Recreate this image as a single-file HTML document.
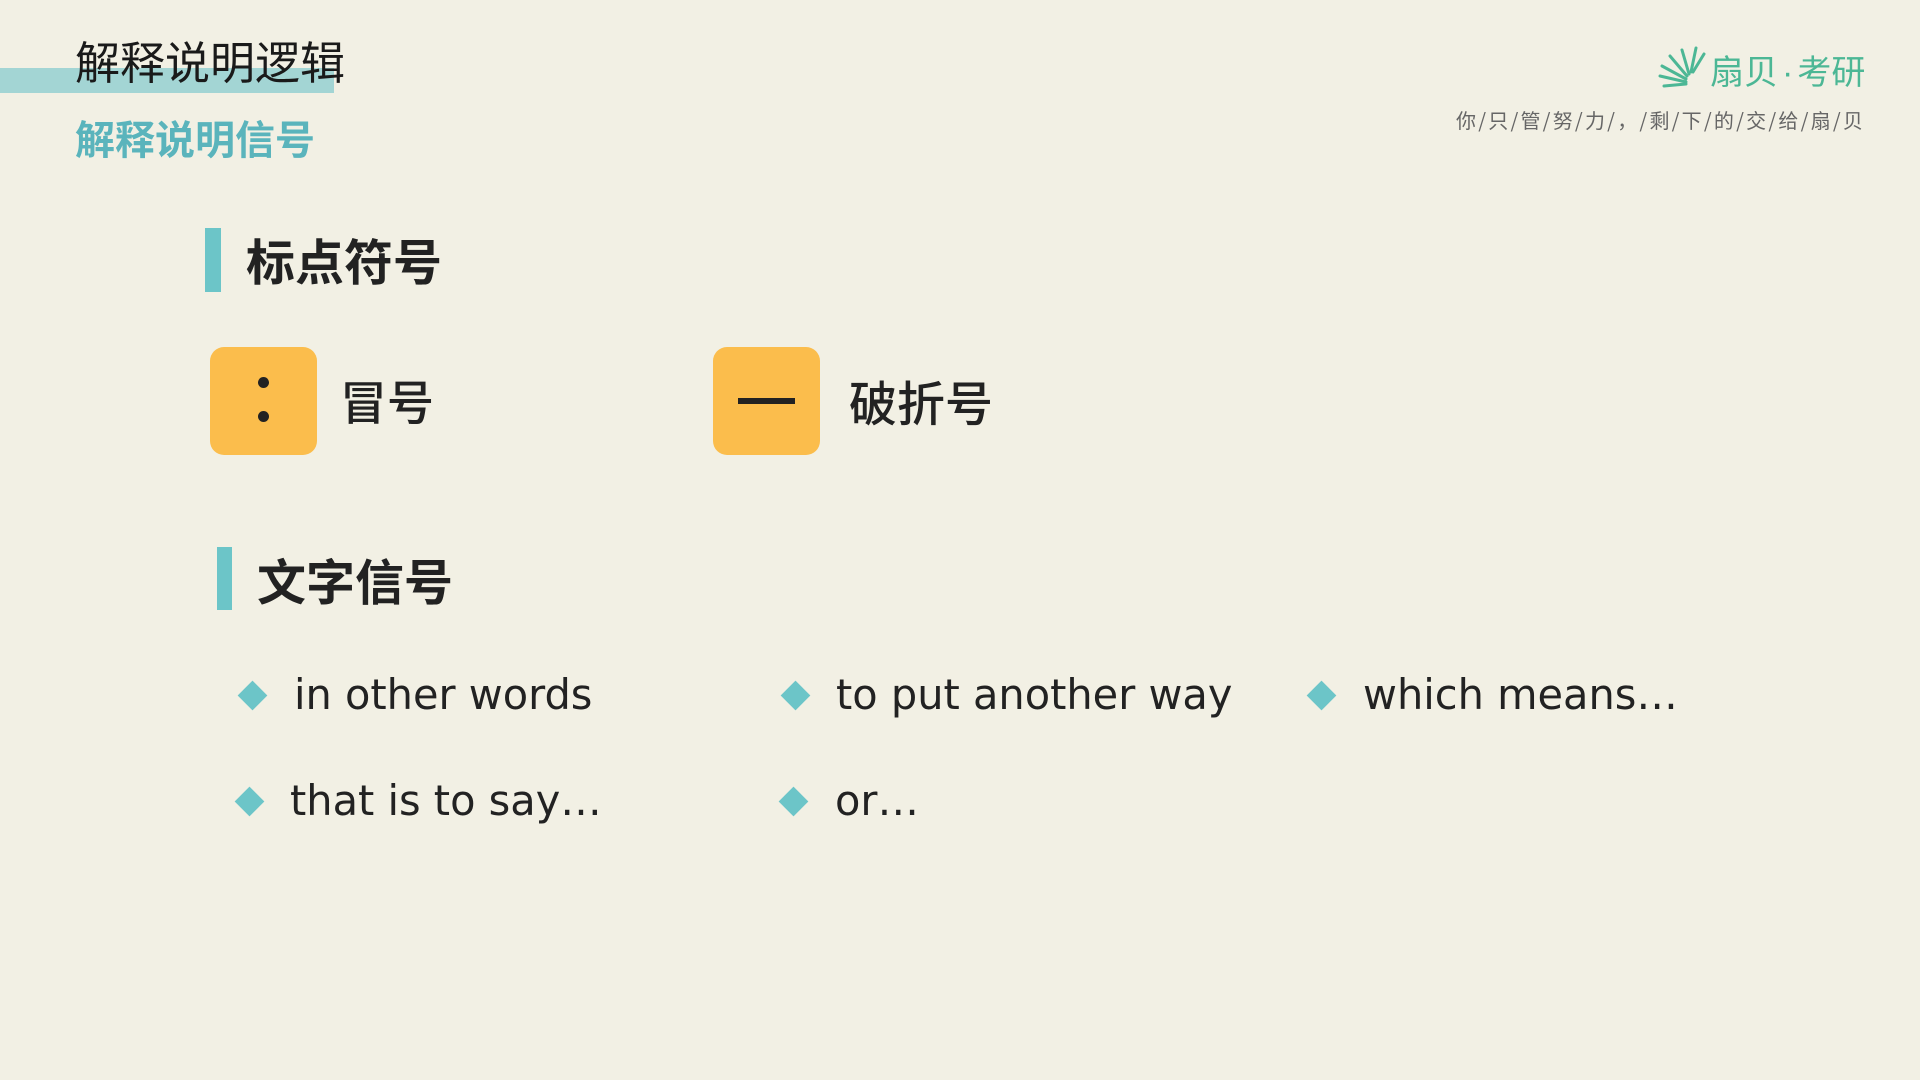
<!DOCTYPE html>
<html><head><meta charset="utf-8"><style>
*{margin:0;padding:0;box-sizing:border-box}
body{width:1920px;height:1080px;overflow:hidden;background:#f2f0e4;position:relative;font-family:"Liberation Sans","Noto Sans CJK SC",sans-serif;color:#222}
.a{position:absolute;white-space:nowrap}
.bar{position:absolute;background:#6cc5c8}
.box{position:absolute;width:107px;height:108px;border-radius:14px;background:#fbbd4c}
.dia{position:absolute;width:21px;height:21px;background:#6cc5c8;transform:rotate(45deg)}
.en{position:absolute;white-space:nowrap;line-height:1;color:#222;font-family:"DejaVu Sans","Liberation Sans",sans-serif;font-size:41.5px}
</style></head><body>
<div style="position:absolute;left:0;top:68px;width:334px;height:25px;background:#a3d5d4"></div>
<div class="a" style="left:75px;top:32px;font-size:45px;line-height:56px;color:#1a1a1a;font-family:'Noto Sans CJK SC',sans-serif">解释说明逻辑</div>
<div class="a" style="left:75px;top:112px;font-size:40px;line-height:50px;color:#5ab4bc;font-weight:bold;font-family:'Noto Sans CJK SC',sans-serif">解释说明信号</div>

<svg class="a" style="left:1656px;top:44px" width="52" height="46" viewBox="0 0 52 46" fill="none" stroke="#4cb795" stroke-width="3" stroke-linecap="round">
<path d="M4 32 L30 38"/><path d="M6 22 L30 35"/><path d="M14 12 L31 32"/><path d="M26 6 L33 30"/><path d="M40 4 L35 28"/><path d="M48 10 L37 28"/><path d="M8 42 L30 40"/>
</svg>
<div class="a" style="left:1710px;top:48px;font-size:34px;line-height:44px;color:#4cb795;font-family:'Noto Sans CJK SC',sans-serif">扇贝<span style="font-family:'Liberation Sans';margin:0 4px">·</span>考研</div>
<div class="a" style="left:1456px;top:106px;font-size:20px;line-height:28px;color:#666;letter-spacing:2.2px;font-family:'Noto Sans CJK SC',sans-serif">你/只/管/努/力/，/剩/下/的/交/给/扇/贝</div>

<div class="bar" style="left:205px;top:228px;width:16px;height:64px"></div>
<div class="a" style="left:246px;top:230px;font-size:49px;line-height:60px;font-weight:bold;font-family:'Noto Sans CJK SC',sans-serif">标点符号</div>

<div class="box" style="left:210px;top:347px"></div>
<div style="position:absolute;left:258px;top:377px;width:11px;height:11px;border-radius:50%;background:#222"></div>
<div style="position:absolute;left:258px;top:411px;width:11px;height:11px;border-radius:50%;background:#222"></div>
<div class="a" style="left:340px;top:370px;font-size:47px;line-height:60px;font-weight:500;font-family:'Noto Sans CJK SC',sans-serif">冒号</div>

<div class="box" style="left:713px;top:347px"></div>
<div style="position:absolute;left:738px;top:398px;width:57px;height:6px;background:#222"></div>
<div class="a" style="left:849px;top:370px;font-size:48px;line-height:60px;font-weight:500;font-family:'Noto Sans CJK SC',sans-serif">破折号</div>

<div class="bar" style="left:217px;top:547px;width:15px;height:63px"></div>
<div class="a" style="left:257px;top:550px;font-size:49px;line-height:60px;font-weight:bold;font-family:'Noto Sans CJK SC',sans-serif">文字信号</div>

<div class="dia" style="left:242px;top:685px"></div>
<div class="en" style="left:294px;top:674px">in other words</div>
<div class="dia" style="left:785px;top:685px"></div>
<div class="en" style="left:836px;top:674px">to put another way</div>
<div class="dia" style="left:1311px;top:685px"></div>
<div class="en" style="left:1363px;top:674px">which means…</div>
<div class="dia" style="left:239px;top:791px"></div>
<div class="en" style="left:290px;top:780px">that is to say…</div>
<div class="dia" style="left:783px;top:791px"></div>
<div class="en" style="left:835px;top:780px">or…</div>
</body></html>
